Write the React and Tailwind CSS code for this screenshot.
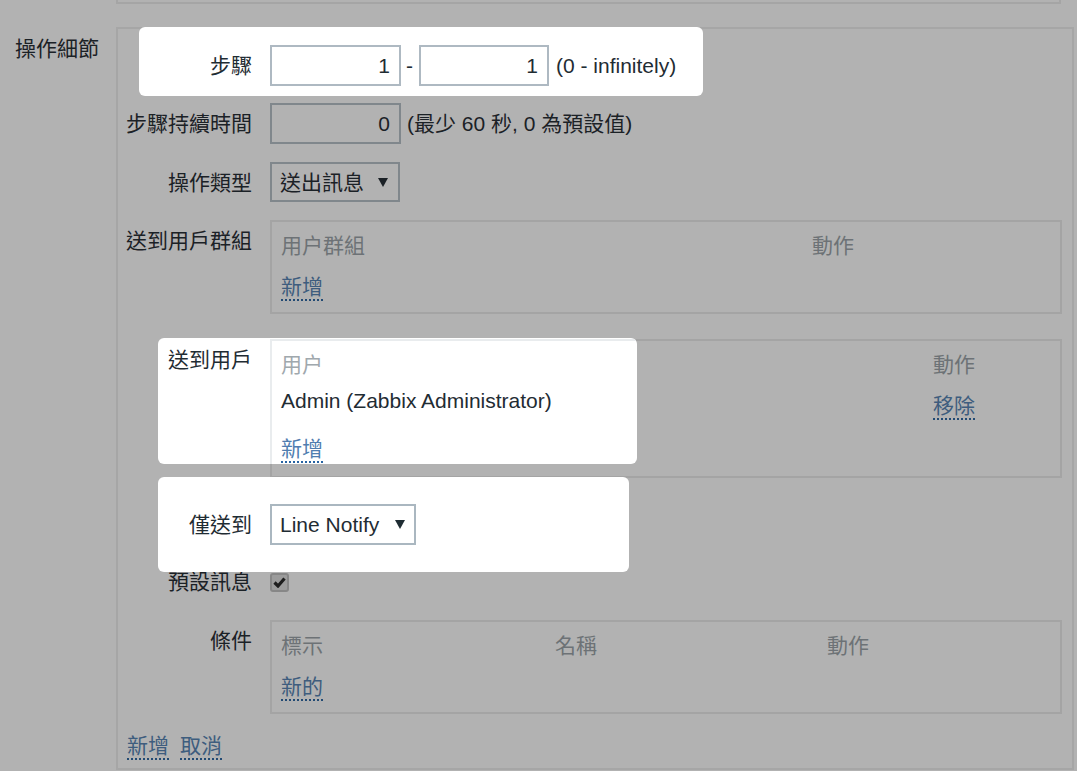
import React from 'react';

function Arrow({ className }) {
  return (
    <svg width="10" height="9" viewBox="0 0 10 9" className={className}>
      <polygon points="0,0 10,0 5,9" fill="currentColor" />
    </svg>
  );
}

function Link({ dim, children }) {
  return (
    <span
      className={
        dim
          ? 'inline-block leading-[24px] border-b-2 border-dotted border-[#224a73] text-[#3e5d7e]'
          : 'inline-block leading-[24px] border-b-2 border-dotted border-[#2563a3] text-[#4f7db0]'
      }
    >
      {children}
    </span>
  );
}

export default function App() {
  return (
    <div className="w-[1077px] h-[771px] overflow-hidden bg-[#b2b2b2] text-[21px] text-[#1b2126] font-['Liberation_Sans','Noto_Sans_CJK_TC',sans-serif]">
      {/* bottom edge of the previous panel */}
      <div className="ml-[116px] w-[945px] h-[4px] border-x-2 border-b-2 border-[#a5a5a5]" />

      <div className="flex mt-[23px]">
        <div className="w-[116px] pl-[15px] pt-[9px] leading-[25px]">操作細節</div>

        <div className="w-[958px] h-[743px] border-2 border-[#a6a6a6]">
          {/* 步驟 - highlighted */}
          <div className="relative -mt-[2px] ml-[21px] w-[564px] h-[69px] bg-white rounded-md pt-[18px] text-[#1f2c33]">
            <div className="flex items-center h-[41px]">
              <div className="w-[113px] text-right leading-[25px]">步驟</div>
              <div className="ml-[18px] w-[131px] h-[41px] border-2 border-[#aeb9c2] text-right pr-[9px] leading-[37px]">1</div>
              <span className="ml-[5px] mr-[6px] leading-[25px]">-</span>
              <div className="w-[130px] h-[41px] border-2 border-[#aeb9c2] text-right pr-[9px] leading-[37px]">1</div>
              <span className="ml-[7px] leading-[25px]">(0 - infinitely)</span>
            </div>
          </div>

          {/* 步驟持續時間 */}
          <div className="mt-[7px] flex items-center h-[41px]">
            <div className="w-[134px] text-right leading-[25px]">步驟持續時間</div>
            <div className="ml-[18px] w-[131px] h-[41px] border-2 border-[#80878c] text-right pr-[9px] leading-[37px]">0</div>
            <span className="ml-[6px] leading-[25px]">(最少 60 秒, 0 為預設值)</span>
          </div>

          {/* 操作類型 */}
          <div className="mt-[18px] flex items-center h-[40px]">
            <div className="w-[134px] text-right leading-[25px]">操作類型</div>
            <div className="ml-[18px] w-[130px] h-[40px] border-2 border-[#80878c] flex items-center justify-between pl-[8px] pr-[10px]">
              <span className="leading-[25px]">送出訊息</span>
              <Arrow className="text-[#1b2126]" />
            </div>
          </div>

          {/* 送到用戶群組 */}
          <div className="mt-[18px] flex items-start">
            <div className="w-[134px] text-right mt-[8px] leading-[25px]">送到用戶群組</div>
            <div className="ml-[18px] w-[792px] h-[94px] border-2 border-[#a4a4a4] pt-[11px] pl-[9px]">
              <div className="grid grid-cols-[531px_1fr] leading-[25px] text-[#6d7276]">
                <span>用户群組</span>
                <span>動作</span>
              </div>
              <div className="mt-[13px]">
                <Link dim>新增</Link>
              </div>
            </div>
          </div>

          {/* 送到用戶 */}
          <div className="relative mt-[25px] flex items-start">
            <div className="invisible w-[134px] text-right mt-[8px] leading-[25px]">送到用戶</div>
            <div className="ml-[18px] w-[792px] h-[139px] border-2 border-[#a4a4a4] pt-[11px] pl-[9px]">
              <div className="grid grid-cols-[652px_1fr] leading-[25px] text-[#6d7276]">
                <span className="invisible">用户</span>
                <span>動作</span>
              </div>
              <div className="mt-[11px] grid grid-cols-[652px_1fr] items-start">
                <span className="invisible leading-[25px]">Admin (Zabbix Administrator)</span>
                <div className="pt-[2px]">
                  <Link dim>移除</Link>
                </div>
              </div>
              <div className="invisible mt-[20px]">
                <Link dim>新增</Link>
              </div>
            </div>

            {/* highlight over the left part */}
            <div className="absolute left-[40px] -top-[1px] w-[479px] h-[126px] bg-white rounded-md flex overflow-hidden text-[#1f2c33]">
              <div className="w-[94px] shrink-0 text-right pt-[9px] leading-[25px]">送到用戶</div>
              <div className="ml-[18px] flex-1 mt-[1px] border-l-2 border-t-2 border-[#e9ecee] pt-[11px] pl-[9px]">
                <div className="leading-[25px] text-[#a0a8ad]">用户</div>
                <div className="mt-[11px] leading-[25px]">Admin (Zabbix Administrator)</div>
                <div className="mt-[20px]">
                  <Link>新增</Link>
                </div>
              </div>
            </div>
          </div>

          {/* 僅送到 - highlighted */}
          <div className="relative -mt-[1px] ml-[40px] w-[471px] h-[95px] bg-white rounded-md flex items-center text-[#1f2c33]">
            <div className="w-[94px] text-right leading-[25px]">僅送到</div>
            <div className="ml-[18px] w-[146px] h-[41px] border-2 border-[#aab7c0] flex items-center justify-between pl-[8px] pr-[9px]">
              <span className="leading-[25px]">Line Notify</span>
              <Arrow className="text-[#1f2c33]" />
            </div>
          </div>

          {/* 預設訊息 */}
          <div className="-mt-[2px] h-[24px] flex items-center">
            <div className="w-[134px] text-right leading-[24px]">預設訊息</div>
            <div className="ml-[18px] w-[19px] h-[19px] rounded-[3px] border-2 border-[#878787] bg-[#9c9c9c] flex items-center justify-center">
              <svg width="13" height="11" viewBox="0 0 13 11">
                <path d="M1.5 5.5 L5 9 L11.5 1.5" fill="none" stroke="#1e1e1e" strokeWidth="3.2" />
              </svg>
            </div>
          </div>

          {/* 條件 */}
          <div className="mt-[26px] flex items-start">
            <div className="w-[134px] text-right mt-[8px] leading-[25px]">條件</div>
            <div className="ml-[18px] w-[792px] h-[94px] border-2 border-[#a4a4a4] pt-[11px] pl-[9px]">
              <div className="grid grid-cols-[274px_272px_1fr] leading-[25px] text-[#6d7276]">
                <span>標示</span>
                <span>名稱</span>
                <span>動作</span>
              </div>
              <div className="mt-[13px]">
                <Link dim>新的</Link>
              </div>
            </div>
          </div>

          {/* 新增 / 取消 */}
          <div className="mt-[20px] pl-[9px] flex gap-[11px]">
            <Link dim>新增</Link>
            <Link dim>取消</Link>
          </div>
        </div>
      </div>
    </div>
  );
}
